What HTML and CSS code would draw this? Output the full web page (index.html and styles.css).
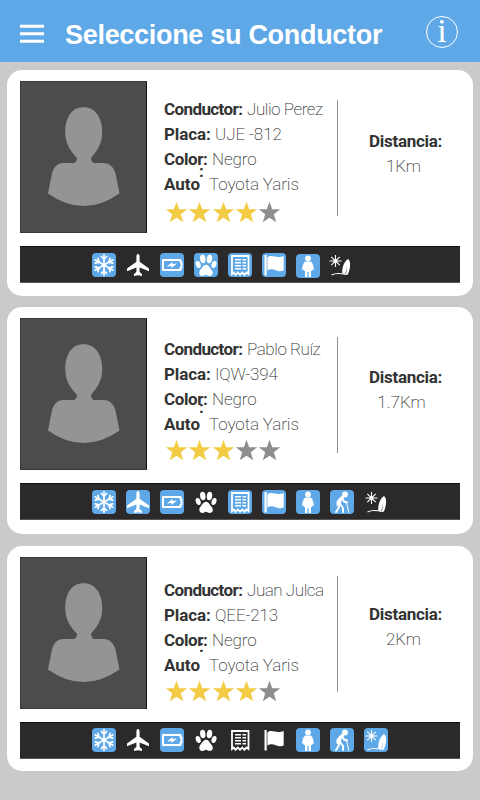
FILE: index.html
```html
<!DOCTYPE html>
<html lang="es">
<head>
<meta charset="utf-8">
<title>Seleccione su Conductor</title>
<link rel="stylesheet" href="styles.css">
</head>
<body>
<svg class="defs" aria-hidden="true">
  <symbol id="avatar" viewBox="0 0 126 152"><path fill="#949494" d="M63 25.500C51 25.500 44.500 36 44.500 51C44.500 64 51 71 56.500 77C56 80 55 82 53.500 82H43C36 82 32.500 87 31 93L27 113Q63 138.500 99.500 113L95.500 93C94 87 90 82 83 82H73C71 80 71 79 70.500 77C76 71 82 63 82 51C82 36 75 25.500 63 25.500Z"/></symbol>
  <symbol id="star" viewBox="0 0 24 24"><path d="M12 .8L14.800 8.700H23.200L16.500 13.900L19 22.300L12 17.400L5 22.300L7.500 13.900L.8 8.700H9.200Z"/></symbol>
  <symbol id="snow" viewBox="0 0 24 24"><g fill="none" stroke="#fff" stroke-width="1.700" stroke-linecap="round"><g id="arm"><path d="M12 12V1.700M9.300 3.500L12 6.200L14.700 3.500"/></g><use href="#arm" transform="rotate(60 12 12)"/><use href="#arm" transform="rotate(120 12 12)"/><use href="#arm" transform="rotate(180 12 12)"/><use href="#arm" transform="rotate(240 12 12)"/><use href="#arm" transform="rotate(300 12 12)"/></g></symbol>
  <symbol id="plane" viewBox="0 0 24 24"><path fill="#fff" d="M12 1C10.700 1 10.400 2.500 10.400 4V8.700L1 15.600V18.200L10.400 14.500V19L8 21V23L12 22.200L16 23V21L13.600 19V14.500L23 18.200V15.600L13.600 8.700V4C13.600 2.500 13.300 1 12 1Z"/></symbol>
  <symbol id="battery" viewBox="0 0 24 24"><path fill="none" stroke="#fff" stroke-width="2" stroke-linejoin="round" d="M3 7H20.500V9L21.500 9.500V14.500L20.500 15V17H3Z"/><path fill="#fff" d="M7 13.500L12.500 9V11L17 10.500L11.500 15V13Z"/></symbol>
  <symbol id="paw" viewBox="0 0 24 24"><g fill="#fff"><ellipse cx="8.800" cy="6" rx="2.700" ry="4.200" transform="rotate(-7 8.800 6)"/><ellipse cx="15.500" cy="6" rx="2.700" ry="4.200" transform="rotate(7 15.500 6)"/><ellipse cx="4.200" cy="11.500" rx="2.400" ry="3.600" transform="rotate(-18 4.200 11.500)"/><ellipse cx="20" cy="11.500" rx="2.400" ry="3.600" transform="rotate(18 20 11.500)"/><path d="M12 11.800C9.500 11.800 8.500 14.300 7 16C4.500 18.500 4.700 22.500 8 23C10 23.100 10.500 21.700 12 21.700S14 23.100 16 23C19.700 22.500 19.500 18.500 17 16.300C15.500 14.500 14.500 11.800 12 11.800Z"/></g></symbol>
  <symbol id="receipt" viewBox="0 0 24 24"><g fill="none" stroke="#fff"><path stroke-width="1.800" d="M4 21V3H20.500V21L18.500 19.500L16.500 21.800L14.300 19.500L12 21.800L9.800 19.500L7.500 21.800L5.800 19.500Z"/><path stroke-width="1.500" d="M7 6.700H13M7 9.700H13M7 12.700H13M7 15.700H13M14.500 6.700H18M14.500 9.700H18M14.500 12.700H18M14.500 15.700H18"/></g></symbol>
  <symbol id="flag" viewBox="0 0 24 24"><path fill="#fff" d="M2.500 2H4.700V22.500H2.500ZM5.400 4.500C10 .8 14 6 21.700 3V17.500C15 20.500 12 13.500 5.400 17.500Z"/></symbol>
  <symbol id="person" viewBox="0 0 24 24"><g fill="#fff"><circle cx="12" cy="4.300" r="2.900"/><path d="M9.500 7.500H14.500C16.500 8 17.500 12 18 15.500L16.600 16L16 14.500L16.300 17H15V23H12.600V18H11.400V23H9V17H7.700L8 14.500L7.400 16L6 15.500C6.500 12 7.500 8 9.500 7.500Z"/></g></symbol>
  <symbol id="elder" viewBox="0 0 24 24"><g fill="none" stroke="#fff" stroke-linecap="round" stroke-linejoin="round"><path stroke-width="3.200" d="M12.500 7.500C9.800 9 9.200 11 9.600 14.500"/><path stroke-width="2" d="M9.300 14L8.600 18L6 22M10.300 14.500L13 18V22M10 9L7.500 12V15M12.500 9L14 11.500L17 12.500"/><path stroke-width="1" d="M16.500 12.500L18.800 22.500"/></g><circle cx="15" cy="4.500" r="2.900" fill="#fff"/></symbol>
  <symbol id="beach" viewBox="0 0 24 24"><path fill="none" stroke="#fff" stroke-width="1.100" d="M7.500 2V14M1.500 8H13.500M3.300 3.800L11.700 12.200M11.700 3.800L3.300 12.200M3.500 22C8 19.500 12 20 18 21.500"/><circle cx="7.500" cy="8" r="2" fill="#fff"/><path fill="#fff" d="M14.200 20.500C14 14 16.500 8 20 6C23.200 8 22.500 16 19.700 21.800H17.800L19.300 12.500L17.200 21.300Z"/></symbol>
</svg>
<header class="topbar">
  <svg class="menu" viewBox="0 0 24 20"><path fill="#fff" d="M0 .8H24V3.800H0ZM0 8.300H24V11.300H0ZM0 15.800H24V18.800H0Z"/></svg>
  <h1>Seleccione su Conductor</h1>
  <div class="info">i</div>
</header>
<main>
  <section class="card first">
    <div class="body">
      <svg class="photo"><use href="#avatar"/></svg>
      <div class="details">
        <p><b class="name">Conductor:</b><span class="v1">Julio Perez</span></p>
        <p><b class="plate">Placa:</b><span class="v2">UJE -812</span></p>
        <p><b class="color">Color:</b><span>Negro</span></p>
        <p><b class="auto">Auto<i class="colon">:</i></b><span class="car">Toyota Yaris</span></p>
        <div class="stars"><svg><use href="#star"/></svg><svg><use href="#star"/></svg><svg><use href="#star"/></svg><svg><use href="#star"/></svg><svg class="off"><use href="#star"/></svg></div>
      </div>
      <div class="distance"><b>Distancia:</b><span>1Km</span></div>
    </div>
    <div class="services">
      <svg class="on"><use href="#snow"/></svg><svg><use href="#plane"/></svg><svg class="on"><use href="#battery"/></svg><svg class="on"><use href="#paw"/></svg><svg class="on"><use href="#receipt"/></svg><svg class="on"><use href="#flag"/></svg><svg class="on low"><use href="#person"/></svg><svg class="shifted"><use href="#beach"/></svg>
    </div>
  </section>
  <section class="card second">
    <div class="body">
      <svg class="photo"><use href="#avatar"/></svg>
      <div class="details">
        <p><b class="name">Conductor:</b><span class="v1">Pablo Ruíz</span></p>
        <p><b class="plate">Placa:</b><span class="v2">IQW-394</span></p>
        <p><b class="color">Color:</b><span>Negro</span></p>
        <p><b class="auto">Auto<i class="colon">:</i></b><span class="car">Toyota Yaris</span></p>
        <div class="stars"><svg><use href="#star"/></svg><svg><use href="#star"/></svg><svg><use href="#star"/></svg><svg class="off"><use href="#star"/></svg><svg class="off"><use href="#star"/></svg></div>
      </div>
      <div class="distance"><b>Distancia:</b><span>1.7Km</span></div>
    </div>
    <div class="services">
      <svg class="on"><use href="#snow"/></svg><svg class="on"><use href="#plane"/></svg><svg class="on"><use href="#battery"/></svg><svg><use href="#paw"/></svg><svg class="on"><use href="#receipt"/></svg><svg class="on"><use href="#flag"/></svg><svg class="on"><use href="#person"/></svg><svg class="on"><use href="#elder"/></svg><svg><use href="#beach"/></svg>
    </div>
  </section>
  <section class="card third">
    <div class="body">
      <svg class="photo"><use href="#avatar"/></svg>
      <div class="details">
        <p><b class="name">Conductor:</b><span class="v1">Juan Julca</span></p>
        <p><b class="plate">Placa:</b><span class="v2">QEE-213</span></p>
        <p><b class="color">Color:</b><span>Negro</span></p>
        <p><b class="auto">Auto<i class="colon">:</i></b><span class="car">Toyota Yaris</span></p>
        <div class="stars"><svg><use href="#star"/></svg><svg><use href="#star"/></svg><svg><use href="#star"/></svg><svg><use href="#star"/></svg><svg class="off"><use href="#star"/></svg></div>
      </div>
      <div class="distance"><b>Distancia:</b><span>2Km</span></div>
    </div>
    <div class="services">
      <svg class="on"><use href="#snow"/></svg><svg><use href="#plane"/></svg><svg class="on"><use href="#battery"/></svg><svg><use href="#paw"/></svg><svg><use href="#receipt"/></svg><svg><use href="#flag"/></svg><svg class="on"><use href="#person"/></svg><svg class="on"><use href="#elder"/></svg><svg class="on"><use href="#beach"/></svg>
    </div>
  </section>
</main>
</body>
</html>
```
FILE: styles.css
```css
* { box-sizing: border-box; }
body { margin: 0; height: 800px; overflow: hidden; background: #cacaca; font-family: Roboto, sans-serif; }
.defs { display: none; }
.topbar { height: 62px; background: #5fa8e8; display: flex; align-items: center; padding: 5px 22px 0 20px; color: #fff; }
.menu { width: 24px; height: 20px; margin-top: 0; }
h1 { margin: 3px 0 0 21px; font: bold 27px/32px "Liberation Sans", sans-serif; letter-spacing: -.3px; white-space: nowrap; width: 361px; }
.info { flex: none; width: 32px; height: 32px; margin-top: -4px; border: 1px solid #fff; border-radius: 50%; font: 34px/28px "Liberation Serif", serif; text-align: center; }
main { padding: 8px 7px 0; display: grid; grid-template-columns: minmax(0, 1fr); grid-template-rows: 226px 227px 225px; row-gap: 11px; }
.card { background: #fff; border-radius: 15px; padding: 11px 13px 0; }
.third { margin-top: 1px; height: 225px; }
.body { display: flex; height: 152px; }
.photo { flex: none; width: 127px; height: 152px; background: #4c4c4c; border: 1px solid #393939; border-right-color: #111; }
.details { flex: none; width: 191px; height: 116px; margin: 19px 0 0; padding-left: 17px; border-right: 1px solid #929292; }
p { margin: 0; height: 25px; display: flex; align-items: center; font-size: 17px; color: #333; white-space: nowrap; font-weight: 200; letter-spacing: -.1px; }
.details p:first-child { margin-top: -4px; }
.second .details p:first-child { margin-top: -1px; }
.third .details p:first-child { margin-top: 1px; }
b { font-weight: 700; color: #333; }
.name { width: 83px; letter-spacing: -.6px; }
.plate { width: 51px; letter-spacing: -.1px; }
.color { width: 48px; letter-spacing: -.4px; }
.auto { width: 45px; position: relative; letter-spacing: 0; }
.v1 { letter-spacing: -.45px; }
.colon { position: absolute; left: 35px; top: -13px; font-style: normal; }
.second .colon { top: -17px; }
.third .colon { top: -19px; }
.stars { display: flex; margin: 5px 0 0 1px; gap: .300px; }
.second .stars { margin-top: 3px; }
.third .stars { margin-top: 3px; }
.stars svg { width: 23px; height: 23px; fill: #f3cb45; }
.stars .off { fill: #8e8e8e; }
.distance { flex: none; width: 135px; margin-right: -12px; display: flex; flex-direction: column; align-items: center; padding-top: 48px; line-height: 25px; font-size: 17px; font-weight: 200; color: #333; }
.distance span { margin-right: 4px; }
.second .distance span { margin-right: 8px; }
.second .distance { padding-top: 47px; }
.third .distance { padding-top: 45px; }
.distance b { letter-spacing: -.3px; }
.services { height: 37px; margin-top: 13px; background: #2b292a; border-top: 1px solid #111; border-bottom: 1px solid #555; display: flex; gap: 10px; padding: 5px 0 0 72px; }
.first .services { padding-top: 6px; }
.second .services { padding-top: 6px; }
.services svg { width: 24px; height: 24px; border-radius: 4px; }
.services .on { background: #5fa8e8; }
.services .low { margin-top: 1px; }
.services .shifted { margin-left: -2px; }
```
